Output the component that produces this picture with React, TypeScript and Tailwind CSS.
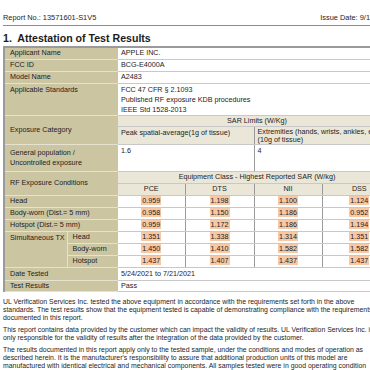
import { FC } from "react";

const HL: FC<{ v: string }> = ({ v }) => (
    <span className="bg-[#f7c8a5] px-[1px]">{v}</span>
);

const rows = [
    { label: "Head", vals: ["0.959", "1.198", "1.100", "1.124"] },
    { label: "Body-worn (Dist.= 5 mm)", vals: ["0.958", "1.150", "1.186", "0.952"] },
    { label: "Hotspot (Dist.= 5 mm)", vals: ["0.959", "1.172", "1.186", "1.194"] },
];

const simRows = [
    { label: "Head", vals: ["1.351", "1.338", "1.314", "1.351"] },
    { label: "Body-worn", vals: ["1.450", "1.410", "1.582", "1.582"] },
    { label: "Hotspot", vals: ["1.437", "1.407", "1.437", "1.437"] },
];

const lbl = "bg-[#ccc5a2] border-b border-[#e6e2d2] pl-[5px] align-middle";
const val = "bg-white border-b border-[#c8c8c8] pl-[3px] align-top";
const hdr = "bg-[#ebe7d8] border-b border-[#c8c8c8] text-center align-middle";

const App: FC = () => {
    return (
        <div className="w-[370px] h-[370px] overflow-hidden bg-white text-[#1c1c1c]" style={{ fontFamily: '"Liberation Sans", Arial, sans-serif' }}>
            <div className="w-[400px] pl-[3px]">
                {/* page header */}
                <div className="flex text-[7.4px] pt-[12px] pb-[2px] border-b border-[#8c8c8c] w-[397px]">
                    <span>Report No.: 13571601-S1V5</span>
                    <span className="ml-[224px]">Issue Date: 9/13/2021</span>
                </div>

                <h1 className="text-[10.6px] font-bold mt-[5px] mb-[1px] leading-[14px]">1.&nbsp; Attestation of Test Results</h1>

                <table className="table-fixed border-collapse w-[392px] text-[7.2px] leading-[10px] border-t-2 border-l-2 border-[#9a9a9a]">
                    <colgroup>
                        <col className="w-[63px]" />
                        <col className="w-[51px]" />
                        <col className="w-[67px]" />
                        <col className="w-[69px]" />
                        <col className="w-[68px]" />
                        <col className="w-[74px]" />
                    </colgroup>
                    <tbody>
                        <tr className="h-[12px]">
                            <td colSpan={2} className={lbl}>Applicant Name</td>
                            <td colSpan={4} className={val + " !align-middle"}>APPLE INC.</td>
                        </tr>
                        <tr className="h-[12px]">
                            <td colSpan={2} className={lbl}>FCC ID</td>
                            <td colSpan={4} className={val + " !align-middle"}>BCG-E4000A</td>
                        </tr>
                        <tr className="h-[12px]">
                            <td colSpan={2} className={lbl}>Model Name</td>
                            <td colSpan={4} className={val + " !align-middle"}>A2483</td>
                        </tr>
                        <tr className="h-[31px]">
                            <td colSpan={2} className={lbl + " !align-top pt-[1px]"}>Applicable Standards</td>
                            <td colSpan={4} className={val + " pt-[1px]"}>
                                FCC 47 CFR § 2.1093<br />
                                Published RF exposure KDB procedures<br />
                                IEEE Std 1528-2013
                            </td>
                        </tr>
                        <tr className="h-[11px]">
                            <td colSpan={2} rowSpan={2} className={lbl}>Exposure Category</td>
                            <td colSpan={4} className={hdr}>SAR Limits (W/Kg)</td>
                        </tr>
                        <tr className="h-[16px]">
                            <td colSpan={2} className={hdr + " !text-left pl-[3px] !align-top pt-[1px] border-r border-r-[#9a9a9a]"}>Peak spatial-average(1g of tissue)</td>
                            <td colSpan={2} className={hdr + " !text-left pl-[3px] !align-top pt-[1px] leading-[8px]"}>Extremities (hands, wrists, ankles, etc.)<br />(10g of tissue)</td>
                        </tr>
                        <tr className="h-[27px]">
                            <td colSpan={2} className={lbl}>General population /<br />Uncontrolled exposure</td>
                            <td colSpan={2} className={val + " pt-[1px] border-r border-r-[#9a9a9a]"}>1.6</td>
                            <td colSpan={2} className={val + " pt-[1px]"}>4</td>
                        </tr>
                        <tr className="h-[12px]">
                            <td colSpan={2} rowSpan={2} className={lbl}>RF Exposure Conditions</td>
                            <td colSpan={4} className={hdr}>Equipment Class - Highest Reported SAR (W/kg)</td>
                        </tr>
                        <tr className="h-[12px]">
                            <td className={hdr + " border-r border-r-[#9a9a9a]"}>PCE</td>
                            <td className={hdr + " border-r border-r-[#9a9a9a]"}>DTS</td>
                            <td className={hdr + " border-r border-r-[#9a9a9a]"}>NII</td>
                            <td className={hdr}>DSS</td>
                        </tr>
                        {rows.map((r) => (
                            <tr key={r.label} className="h-[12px]">
                                <td colSpan={2} className={lbl}>{r.label}</td>
                                {r.vals.map((v, i) => (
                                    <td key={i} className={"bg-white border-b border-[#c8c8c8] text-center align-middle" + (i < 3 ? " border-r border-r-[#9a9a9a]" : "")}>
                                        <HL v={v} />
                                    </td>
                                ))}
                            </tr>
                        ))}
                        {simRows.map((r, idx) => (
                            <tr key={"s" + r.label} className="h-[12px]">
                                {idx === 0 && (
                                    <td rowSpan={3} className={lbl + " !align-top pt-[1px] border-r border-r-[#e6e2d2]"}>Simultaneous TX</td>
                                )}
                                <td className={lbl}>{r.label}</td>
                                {r.vals.map((v, i) => (
                                    <td key={i} className={"bg-white border-b border-[#c8c8c8] text-center align-middle" + (i < 3 ? " border-r border-r-[#9a9a9a]" : "")}>
                                        <HL v={v} />
                                    </td>
                                ))}
                            </tr>
                        ))}
                        <tr className="h-[13px]">
                            <td colSpan={2} className={lbl}>Date Tested</td>
                            <td colSpan={4} className={val + " !align-middle"}>5/24/2021 to 7/21/2021</td>
                        </tr>
                        <tr className="h-[11px]">
                            <td colSpan={2} className={lbl}>Test Results</td>
                            <td colSpan={4} className={val + " !align-middle"}>Pass</td>
                        </tr>
                    </tbody>
                </table>

                <div className="w-[380px] text-[6.9px] leading-[8.2px] mt-[6px] flex flex-col gap-[3.5px]">
                    <p>UL Verification Services Inc. tested the above equipment in accordance with the requirements set forth in the above standards. The test results show that the equipment tested is capable of demonstrating compliance with the requirements documented in this report.</p>
                    <p>This report contains data provided by the customer which can impact the validity of results. UL Verification Services Inc. is only responsible for the validity of results after the integration of the data provided by the customer.</p>
                    <p>The results documented in this report apply only to the tested sample, under the conditions and modes of operation as described herein. It is the manufacturer's responsibility to assure that additional production units of this model are manufactured with identical electrical and mechanical components. All samples tested were in good operating condition throughout the entire test program. Measurement uncertainties were not taken into account and are published for informational purposes only.</p>
                </div>
            </div>
        </div>
    );
};

export default App;
